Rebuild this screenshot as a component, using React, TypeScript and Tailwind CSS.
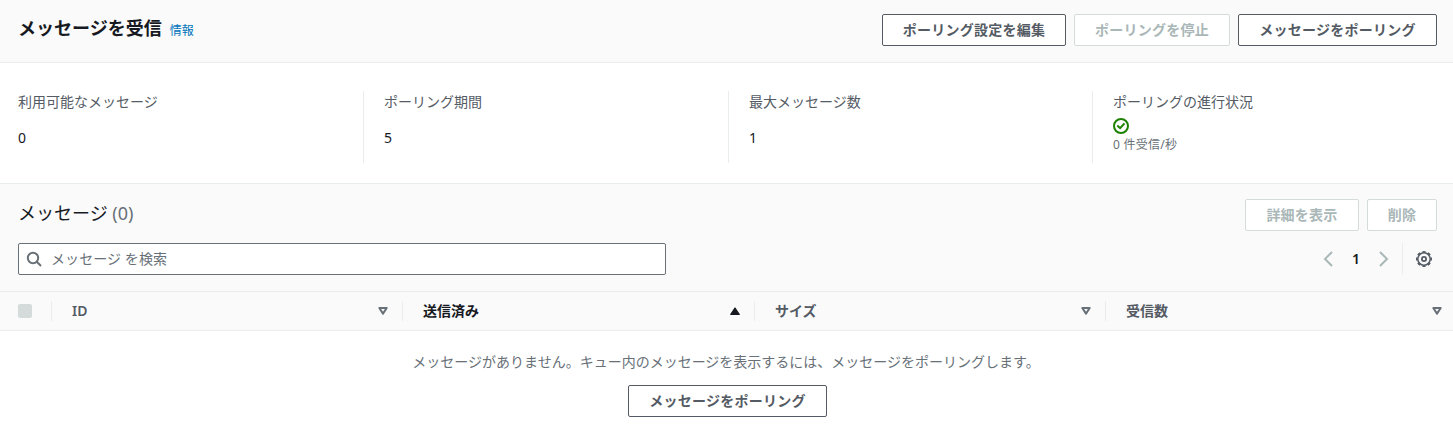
import type { ReactNode } from 'react';

function Button({
  children,
  width,
  disabled = false,
}: {
  children: ReactNode;
  width: string;
  disabled?: boolean;
}) {
  const tone = disabled ? 'border-[#d5dbdb] text-[#aab7b8]' : 'border-[#545b64] text-[#545b64]';
  return (
    <button
      type="button"
      disabled={disabled}
      className={`flex h-8 shrink-0 items-center justify-center whitespace-nowrap rounded-[2px] border bg-white text-sm leading-[22px] font-semibold tracking-[0.25px] ${tone} ${width}`}
    >
      {children}
    </button>
  );
}

function Stat({ label, children, first = false }: { label: string; children: ReactNode; first?: boolean }) {
  return (
    <div className={first ? 'h-[72px]' : 'h-[72px] border-l border-[#eaeded] pl-5'}>
      <div className="text-sm leading-[22px] text-[#545b64]">{label}</div>
      {children}
    </div>
  );
}

function StatValue({ children }: { children: ReactNode }) {
  return <div className="mt-3.5 text-sm leading-[22px] text-[#16191f]">{children}</div>;
}

function SortIcon({ active = false }: { active?: boolean }) {
  return active ? (
    <svg className="h-4 w-4" viewBox="0 0 16 16">
      <path d="M3.8 11.4h8.4L8 5z" fill="#16191f" stroke="#16191f" strokeWidth="1.2" strokeLinejoin="round" />
    </svg>
  ) : (
    <svg className="h-4 w-4" viewBox="0 0 16 16">
      <path d="M4.3 5h7.4L8 10.6z" fill="none" stroke="#687078" strokeWidth="2" strokeLinejoin="round" />
    </svg>
  );
}

function HeaderCell({ label, active = false, last = false }: { label: string; active?: boolean; last?: boolean }) {
  return (
    <div
      className={
        last
          ? 'flex h-5 items-center justify-between border-l border-[#eaeded] pr-2 pl-5'
          : 'flex h-5 items-center justify-between border-l border-[#eaeded] pr-[11px] pl-5'
      }
    >
      <span
        className={
          active
            ? 'text-sm leading-5 font-semibold text-[#16191f]'
            : 'text-sm leading-5 font-semibold text-[#545b64]'
        }
      >
        {label}
      </span>
      <SortIcon active={active} />
    </div>
  );
}

export default function App() {
  return (
    <div className="h-[447px] w-[1453px] overflow-hidden bg-white font-['Noto_Sans','Noto_Sans_CJK_JP',sans-serif] text-sm text-[#16191f]">
      <header className="flex h-[63px] items-start justify-between border-b border-[#eaeded] bg-[#fafafa] pt-3.5 pr-4 pl-[18px]">
        <div className="flex items-baseline gap-2">
          <h1 className="text-lg leading-7 font-bold">メッセージを受信</h1>
          <a className="text-xs text-[#0073bb]">情報</a>
        </div>
        <div className="flex gap-2">
          <Button width="w-[184px]">ポーリング設定を編集</Button>
          <Button width="w-[156px]" disabled>
            ポーリングを停止
          </Button>
          <Button width="w-[199px]">メッセージをポーリング</Button>
        </div>
      </header>

      <section className="grid h-[120px] grid-cols-[345px_365px_364px_1fr] pt-7 pl-[18px]">
        <Stat label="利用可能なメッセージ" first>
          <StatValue>0</StatValue>
        </Stat>
        <Stat label="ポーリング期間">
          <StatValue>5</StatValue>
        </Stat>
        <Stat label="最大メッセージ数">
          <StatValue>1</StatValue>
        </Stat>
        <Stat label="ポーリングの進行状況">
          <svg className="mt-[5px] h-4 w-4" viewBox="0 0 16 16" fill="none" stroke="#1d8102" strokeWidth="2">
            <circle cx="8" cy="8" r="7" />
            <path d="M4.3 7.6l2.8 2.6 4.4-4.8" />
          </svg>
          <div className="mt-0.5 text-xs leading-[18px] tracking-[0.25px] text-[#687078]">0 件受信/秒</div>
        </Stat>
      </section>

      <section className="h-[109px] border-t border-b border-[#eaeded] bg-[#fafafa] pt-[15px] pr-4 pl-[18px]">
        <div className="flex h-8 items-start justify-between">
          <h2 className="text-lg leading-7">
            メッセージ <span className="text-[#687078]">(0)</span>
          </h2>
          <div className="flex gap-2">
            <Button width="w-[114px]" disabled>
              詳細を表示
            </Button>
            <Button width="w-[70px]" disabled>
              削除
            </Button>
          </div>
        </div>
        <div className="mt-3 flex h-8 items-center justify-between">
          <div className="flex h-8 w-[648px] items-center gap-[9px] rounded-[2px] border border-[#687078] bg-white pl-[7px] text-[#687078]">
            <svg className="h-4 w-4" viewBox="0 0 16 16" fill="none" stroke="#687078" strokeWidth="2">
              <circle cx="7" cy="7" r="5.2" />
              <path d="M10.8 10.8L15 15" />
            </svg>
            <span className="tracking-[0.08px]">メッセージ を検索</span>
          </div>
          <div className="flex h-8 items-center">
            <svg className="h-4 w-4" viewBox="0 0 16 16" fill="none" stroke="#aab7b8" strokeWidth="2">
              <path d="M12 1L5 8l7 7" />
            </svg>
            <span className="w-10 text-center font-semibold">1</span>
            <svg className="h-4 w-4" viewBox="0 0 16 16" fill="none" stroke="#aab7b8" strokeWidth="2">
              <path d="M4 1l7 7-7 7" />
            </svg>
            <div className="ml-2.5 flex h-8 items-center border-l border-[#eaeded] pr-[5px] pl-[13px]">
              <svg className="h-4 w-4" viewBox="0 0 16 16" fill="none" stroke="#545b64">
                <circle cx="8" cy="8" r="6.2" strokeWidth="1.5" />
                <circle cx="8" cy="8" r="7.2" strokeWidth="1.6" pathLength="80" strokeDasharray="5.6 4.4" strokeDashoffset="2.8" />
                <circle cx="8" cy="8" r="2.1" strokeWidth="1.8" />
              </svg>
            </div>
          </div>
        </div>
      </section>

      <div className="grid h-[39px] grid-cols-[51px_351px_352px_351px_348px] items-center border-b border-[#eaeded] bg-[#fafafa]">
        <span className="ml-[18px] h-3.5 w-3.5 rounded-[2px] bg-[#d5dbdb]" />
        <HeaderCell label="ID" />
        <HeaderCell label="送信済み" active />
        <HeaderCell label="サイズ" />
        <HeaderCell label="受信数" last />
      </div>

      <div className="flex flex-col items-center pt-5">
        <p className="pr-px leading-[22px] text-[#687078]">
          メッセージがありません。キュー内のメッセージを表示するには、メッセージをポーリングします。
        </p>
        <div className="mt-3 flex pl-0.5">
          <Button width="w-[199px]">メッセージをポーリング</Button>
        </div>
      </div>
    </div>
  );
}
